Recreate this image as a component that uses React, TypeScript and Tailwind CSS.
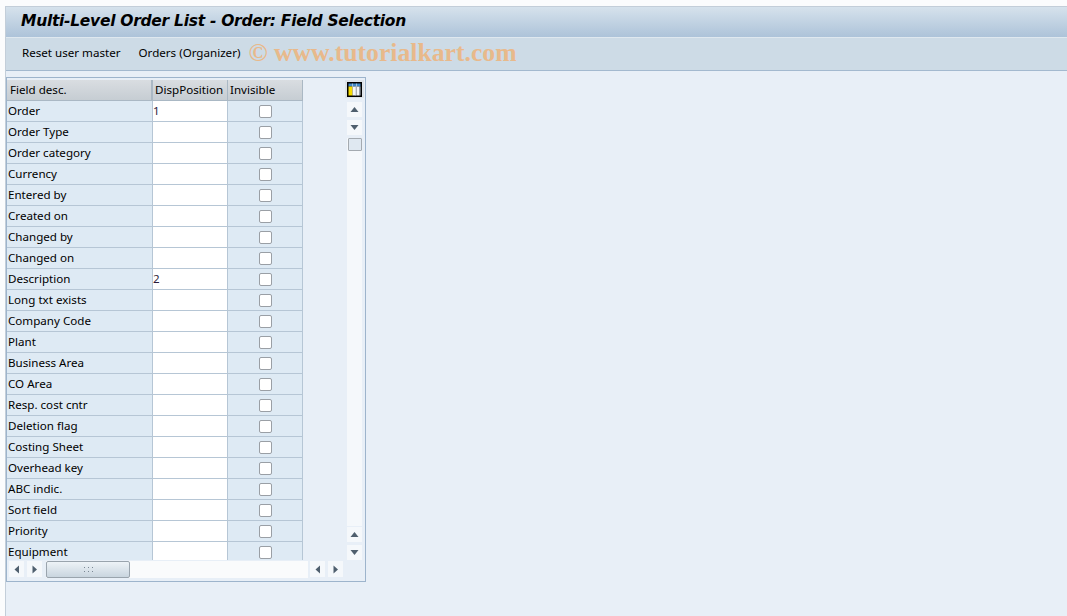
const rows: [string, string][] = [
  ["Order", "1"],
  ["Order Type", ""],
  ["Order category", ""],
  ["Currency", ""],
  ["Entered by", ""],
  ["Created on", ""],
  ["Changed by", ""],
  ["Changed on", ""],
  ["Description", "2"],
  ["Long txt exists", ""],
  ["Company Code", ""],
  ["Plant", ""],
  ["Business Area", ""],
  ["CO Area", ""],
  ["Resp. cost cntr", ""],
  ["Deletion flag", ""],
  ["Costing Sheet", ""],
  ["Overhead key", ""],
  ["ABC indic.", ""],
  ["Sort field", ""],
  ["Priority", ""],
  ["Equipment", ""],
];

function Arrow({ dir }: { dir: "up" | "down" | "left" | "right" }) {
  const points = {
    up: "0.5,7 4.5,2 8.5,7",
    down: "0.5,2 4.5,7 8.5,2",
    left: "7,0.5 2.5,4.5 7,8.5",
    right: "2.5,0.5 7,4.5 2.5,8.5",
  }[dir];
  return (
    <svg width="9" height="9" viewBox="0 0 9 9">
      <polygon points={points} fill="#4f5f6e" />
    </svg>
  );
}

function ScrollBtn({ dir }: { dir: "up" | "down" | "left" | "right" }) {
  const tall = dir === "left" || dir === "right";
  return (
    <div className={`w-[15px] flex items-center justify-center bg-[#f5f8fb] ${tall ? "h-[16px]" : "h-[15px]"}`}>
      <Arrow dir={dir} />
    </div>
  );
}

export default function App() {
  return (
    <div
      className="w-[1067px] h-[616px] overflow-hidden bg-[#fbfcfd] pt-[6px] pl-[5px] text-[11.6px] text-black"
      style={{ fontFamily: '"Noto Sans", "Open Sans", sans-serif' }}
    >
      <div className="h-[610px] border-l border-t border-[#c3ced9] bg-[#e8eff7] flex flex-col">
        {/* Title */}
        <div className="h-[31px] shrink-0 bg-gradient-to-b from-[#d6e2ec] to-[#adc3d9] border-b border-[#dfe8ef] pl-[15px] flex items-center">
          <span
            className="text-[15.5px] font-bold italic text-black leading-none"
            style={{ fontFamily: '"DejaVu Sans", sans-serif', letterSpacing: "-0.28px" }}
          >
            Multi-Level Order List - Order: Field Selection
          </span>
        </div>
        {/* Toolbar */}
        <div className="h-[33px] shrink-0 bg-[#cddbe6] border-b border-[#a3b9cf] pl-[16px] pb-[2px] flex items-center">
          <span>Reset user master</span>
          <span className="ml-[18px]">Orders (Organizer)</span>
          <span
            className="ml-[8px] text-[25.7px] font-bold text-[#e8b98b] leading-none"
            style={{ fontFamily: '"Liberation Serif", serif' }}
          >
            © www.tutorialkart.com
          </span>
        </div>
        {/* Table control */}
        <div className="mt-[6px] w-[360px] h-[505px] border border-[#9db4cc] bg-[#e8eff7] flex flex-col pt-[2px]">
          <div className="flex h-[480px] shrink-0">
            <div className="w-[296px] overflow-hidden">
              <div className="flex h-[21px]">
                <div className="w-[146px] pl-[3px] bg-gradient-to-b from-[#d9dde1] to-[#c6cdd3] border-r-2 border-b border-[#aab8c4] leading-[19px]">Field desc.</div>
                <div className="w-[75px] pl-[2px] bg-gradient-to-b from-[#d9dde1] to-[#c6cdd3] border-r border-b border-[#aab8c4] leading-[19px]">DispPosition</div>
                <div className="w-[75px] pl-[2px] bg-gradient-to-b from-[#d9dde1] to-[#c6cdd3] border-r border-b border-[#aab8c4] leading-[19px]">Invisible</div>
              </div>
              {rows.map(([name, pos]) => (
                <div key={name} className="flex h-[21px]">
                  <div className="w-[146px] pl-px bg-[#deeaf4] border-r border-b border-[#b6c6d5] leading-[19px]">{name}</div>
                  <div className="w-[75px] bg-white border-r border-b border-[#b6c6d5] leading-[19px] text-[#2a1a3a]">{pos}</div>
                  <div className="w-[75px] bg-[#deeaf4] border-r border-b border-[#b6c6d5] flex items-center justify-center">
                    <div className="w-[13px] h-[13px] rounded-[2px] bg-white border border-[#9a9fa5]" />
                  </div>
                </div>
              ))}
            </div>
            {/* Vertical scrollbar */}
            <div className="ml-[42px] w-[19px] flex flex-col items-center">
              <div className="w-[19px] h-[18px] bg-[#dde3e9] flex items-center justify-center">
                <svg width="15" height="15" viewBox="0 0 15 15">
                  <rect width="15" height="15" fill="#000" />
                  <rect x="1.5" y="1.5" width="12" height="3" fill="#3f86c4" />
                  <rect x="1.5" y="4.5" width="4" height="9" fill="#f6dc00" />
                  <rect x="6" y="4.5" width="3" height="9" fill="#f4f6f8" />
                  <rect x="8.5" y="4.5" width="1" height="9" fill="#b9c3cc" />
                  <rect x="10" y="4.5" width="2.5" height="9" fill="#f4f6f8" />
                  <rect x="12.5" y="4.5" width="1" height="9" fill="#b9c3cc" />
                  <rect x="5.5" y="1.5" width="0.5" height="12" fill="#fff" />
                  <rect x="9.5" y="1.5" width="0.5" height="12" fill="#fff" />
                </svg>
              </div>
              <div className="mt-[4px] flex flex-col gap-[3px]">
                <ScrollBtn dir="up" />
                <ScrollBtn dir="down" />
              </div>
              <div className="w-[15px] flex-1 mt-[3px] bg-[#f5f8fb] flex flex-col items-center">
                <div className="w-[14px] h-[13px] rounded-[1px] border border-[#a4aab0] bg-[#dfe8f1]" />
              </div>
              <div className="mt-[1px] flex flex-col gap-[3px]">
                <ScrollBtn dir="up" />
                <ScrollBtn dir="down" />
              </div>
            </div>
          </div>
          {/* Horizontal scrollbar */}
          <div className="h-[18px] shrink-0 pl-[2px] flex items-center">
            <ScrollBtn dir="left" />
            <div className="ml-[3px]"><ScrollBtn dir="right" /></div>
            <div className="ml-[4px] w-[262px] h-[17px] bg-[#fafbfc] flex">
              <div className="w-[84px] h-[17px] rounded-[2px] border border-[#9aa4ad] bg-gradient-to-b from-[#eef3f7] to-[#c9d5df] flex items-center justify-center">
                <svg width="9" height="5" viewBox="0 0 9 5">
                  <g fill="#7a8793">
                    <rect x="0" y="0" width="1" height="1" />
                    <rect x="4" y="0" width="1" height="1" />
                    <rect x="8" y="0" width="1" height="1" />
                    <rect x="0" y="4" width="1" height="1" />
                    <rect x="4" y="4" width="1" height="1" />
                    <rect x="8" y="4" width="1" height="1" />
                  </g>
                </svg>
              </div>
            </div>
            <div className="ml-[2px]"><ScrollBtn dir="left" /></div>
            <div className="ml-[3px]"><ScrollBtn dir="right" /></div>
          </div>
        </div>
      </div>
    </div>
  );
}
